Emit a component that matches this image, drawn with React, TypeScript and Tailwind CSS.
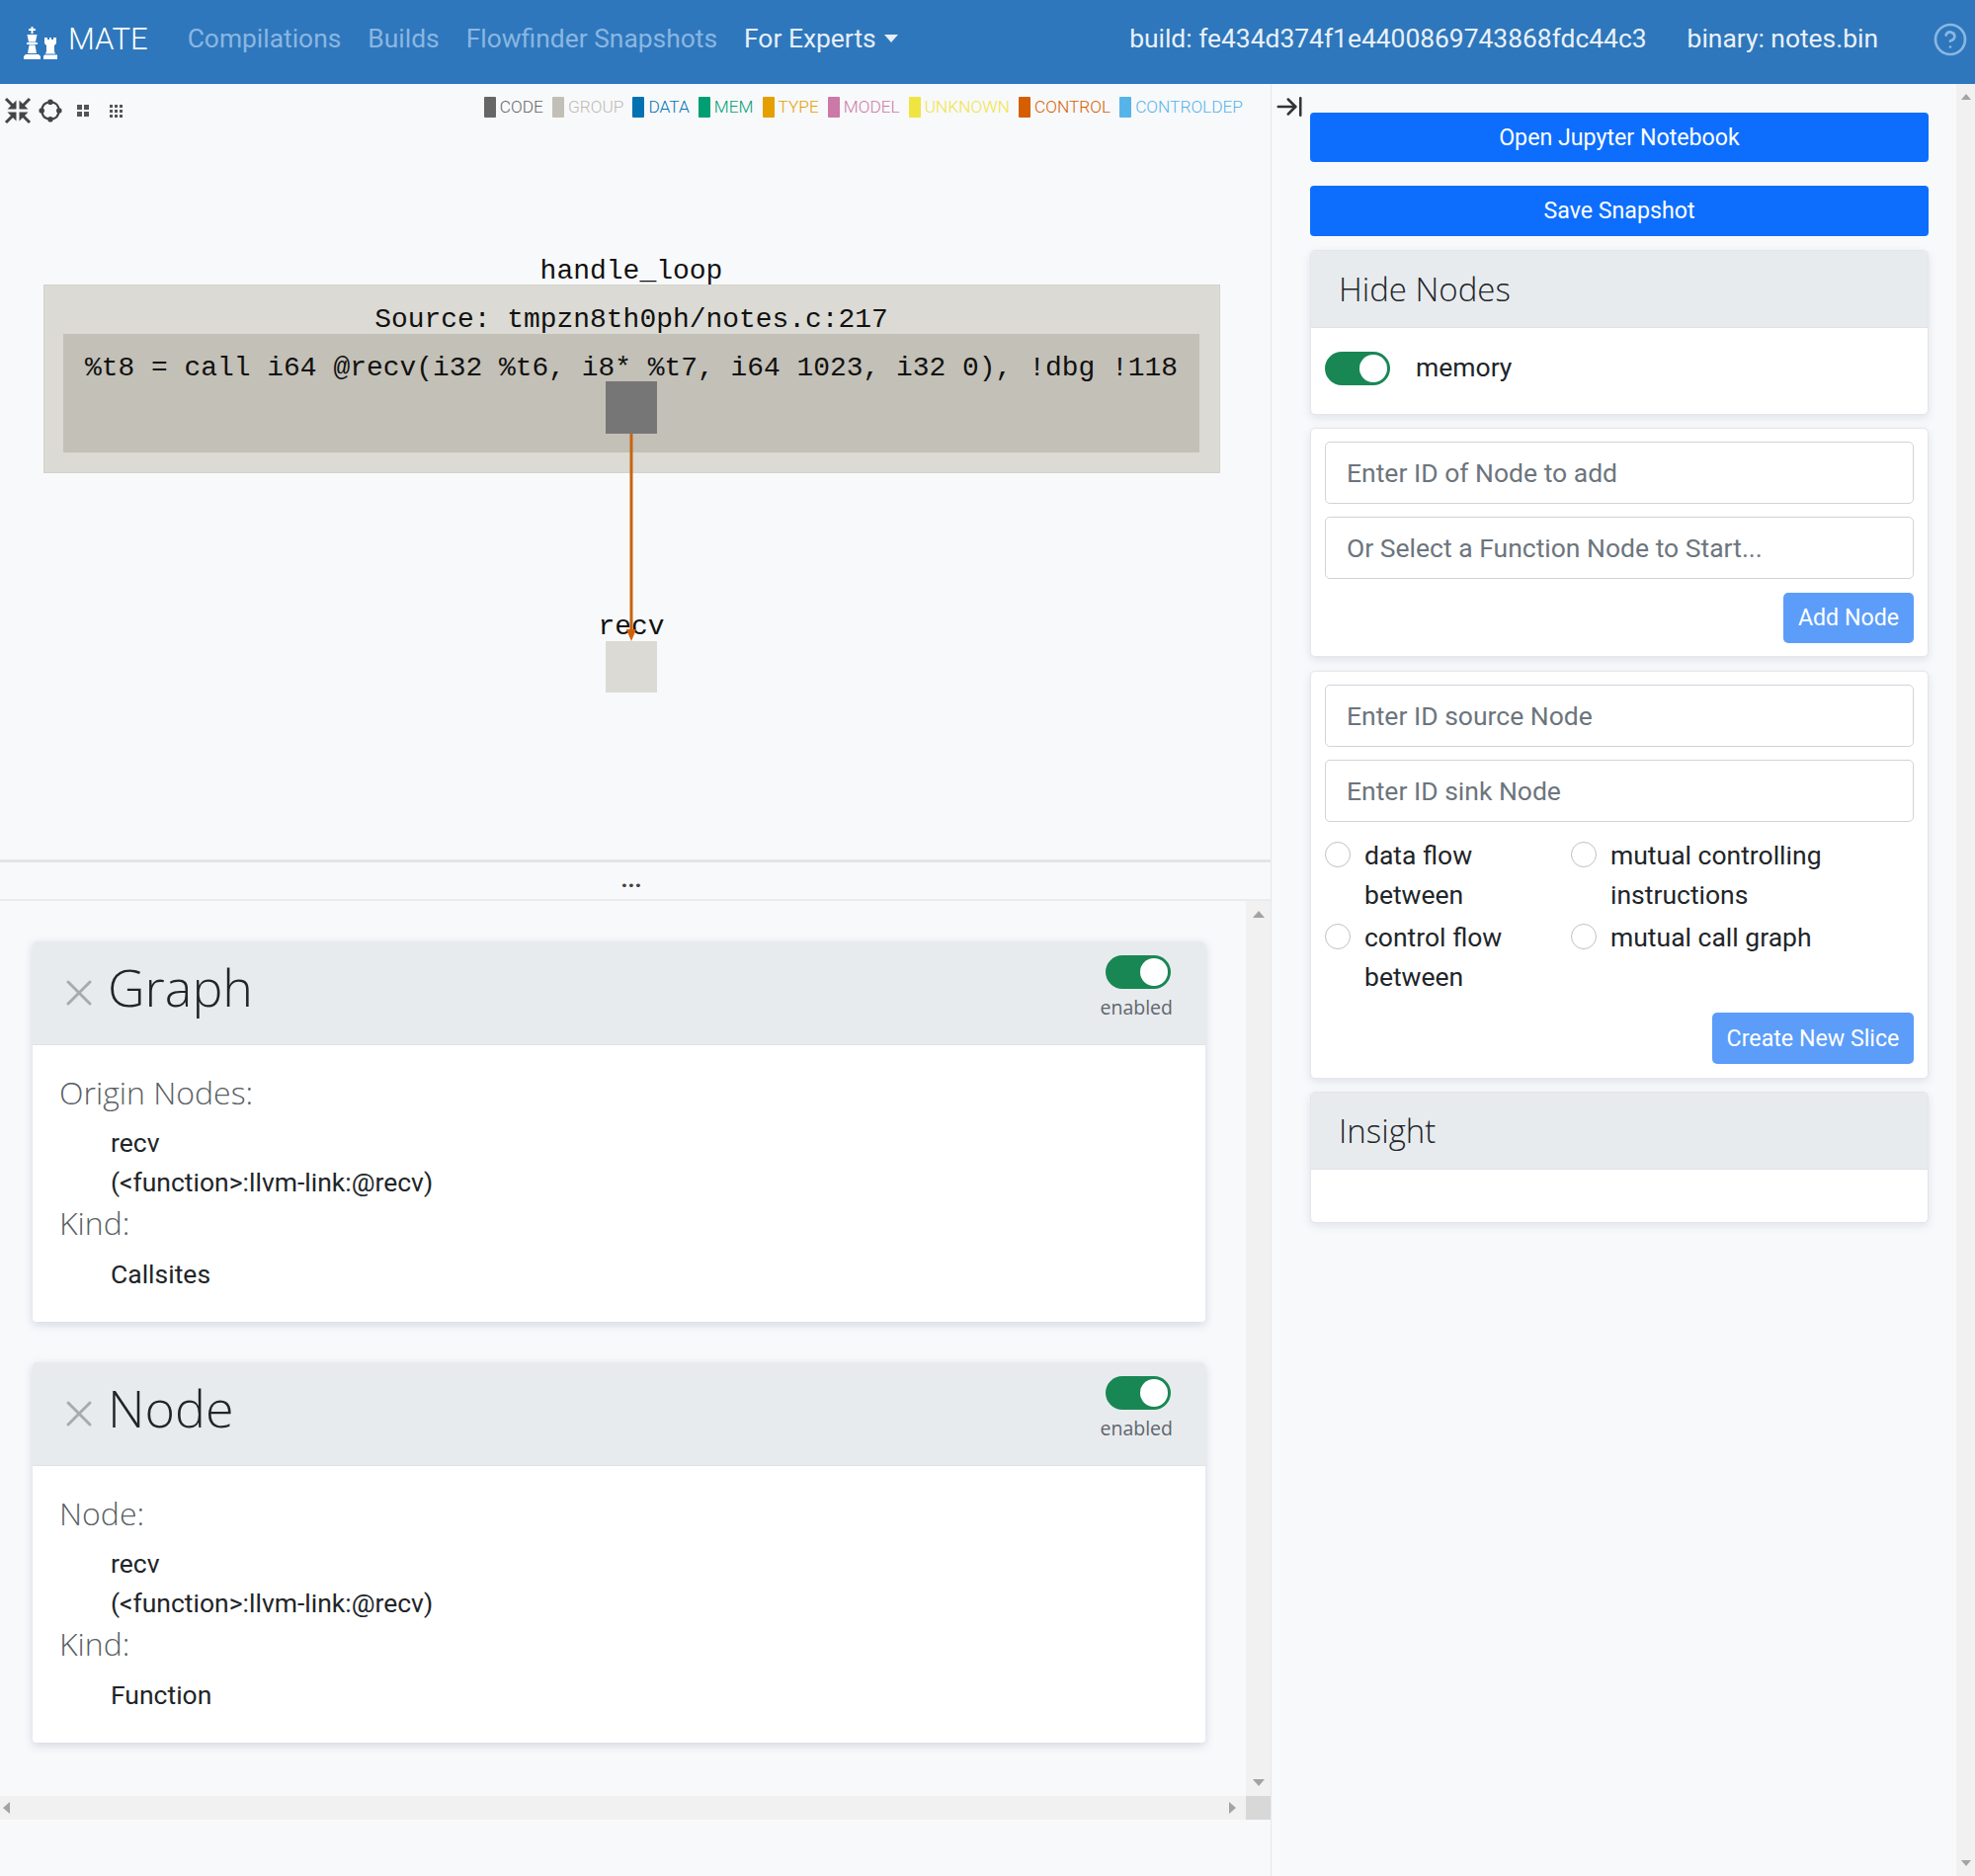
import React from "react";
import { ArrowRightToLine, CircleHelp, X } from "lucide-react";

const legend = [
  { label: "CODE", color: "bg-[#666666]", text: "text-[#666666]" },
  { label: "GROUP", color: "bg-[#c2c0b6]", text: "text-[#bdbbb2]" },
  { label: "DATA", color: "bg-[#0072b2]", text: "text-[#0072b2]" },
  { label: "MEM", color: "bg-[#009e73]", text: "text-[#009e73]" },
  { label: "TYPE", color: "bg-[#e69f00]", text: "text-[#e69f00]" },
  { label: "MODEL", color: "bg-[#cc79a7]", text: "text-[#cc79a7]" },
  { label: "UNKNOWN", color: "bg-[#f0e442]", text: "text-[#f0e442]" },
  { label: "CONTROL", color: "bg-[#d55e00]", text: "text-[#d55e00]" },
  { label: "CONTROLDEP", color: "bg-[#56b4e9]", text: "text-[#56b4e9]" },
];

function Toggle() {
  return (
    <span className="flex h-[34px] w-[66px] items-center justify-end rounded-full bg-[#198754] pr-[3px]">
      <span className="h-[28px] w-[28px] rounded-full bg-white" />
    </span>
  );
}

function ChessLogo() {
  return (
    <svg width="34" height="33" viewBox="0 0 34 33" fill="#fff">
      <path d="M7.5 0h2v2h2.5v2H9.5v3h-2V4H5V2h2.5z" />
      <path d="M3.5 8h10l-1.5 7.5H5z" />
      <rect x="3" y="16" width="11" height="2" />
      <path d="M5.5 18.500h6l1.500 8.500H4z" />
      <path d="M2 28h13l2 2v3H0v-3z" />
      <path d="M21 11h3v2h2v-2h2v2h2v-2h3v6l-2 2v6l1 2.500H22l1-2.500v-6l-2-2z" />
      <path d="M21 28.500h13V33H20v-3z" />
    </svg>
  );
}

function CompressIcon() {
  return (
    <svg width="28" height="28" viewBox="0 0 28 28" fill="#444" stroke="#444" strokeWidth="3">
      <path d="M2 2l8 8M2 26l8-8M26 2l-8 8M26 26l-8-8" />
      <path stroke="none" d="M12.500 12.500H3.500L12.500 3.500zM15.500 12.500H24.500L15.500 3.500zM12.500 15.500H3.500L12.500 24.500zM15.500 15.500H24.500L15.500 24.500z" />
    </svg>
  );
}

function LayoutIcon() {
  return (
    <svg width="24" height="24" viewBox="0 0 24 24" fill="#444" stroke="#444" strokeWidth="2.2">
      <path fill="none" d="M12 3.500Q20.500 3.500 20.500 12Q20.500 20.500 12 20.500Q3.500 20.500 3.500 12Q3.500 3.500 12 3.500Z" />
      <circle cx="12" cy="3.200" r="1.700" />
      <circle cx="20.800" cy="12" r="1.700" />
      <circle cx="12" cy="20.800" r="1.700" />
      <circle cx="3.200" cy="12" r="1.700" />
    </svg>
  );
}

function GridIcon({ count, size, gap }: { count: number; size: number; gap: number }) {
  const cells = Array.from({ length: count * count });
  return (
    <div className="grid" style={{ gridTemplateColumns: `repeat(${count}, ${size}px)`, gap }}>
      {cells.map((_, i) => (
        <span key={i} className="bg-[#555]" style={{ width: size, height: size }} />
      ))}
    </div>
  );
}

function GraphCanvas() {
  return (
    <svg className="block" width="1285" height="730" viewBox="0 140 1285 730">
      <g fontFamily="'Liberation Mono', monospace" fill="#111">
        <text x="639" y="282" fontSize="28" textAnchor="middle">handle_loop</text>
        <rect x="44.500" y="288.500" width="1190" height="190" fill="#dbdad4" stroke="#d2d1cc" />
        <text x="639" y="331" fontSize="27.930" textAnchor="middle">Source: tmpzn8th0ph/notes.c:217</text>
        <rect x="64" y="338" width="1150" height="120" fill="#c3c0b7" />
        <text x="639" y="380" fontSize="27.930" textAnchor="middle">%t8 = call i64 @recv(i32 %t6, i8* %t7, i64 1023, i32 0), !dbg !118</text>
        <rect x="613" y="386" width="52" height="53" fill="#767676" />
        <text x="639" y="642" fontSize="28" textAnchor="middle">recv</text>
        <rect x="613" y="649" width="52" height="52" fill="#dbdad4" />
      </g>
      <path d="M639 439V640" stroke="#c8640f" strokeWidth="3" />
      <path d="M634 637h10l-5 12z" fill="#d55e00" />
    </svg>
  );
}

function DetailCard({
  title,
  first,
  kind,
}: {
  title: string;
  first: string;
  kind: string;
}) {
  return (
    <div className="h-[385px] w-[1187px] overflow-hidden rounded-[4px] bg-white shadow-[0_3px_10px_rgba(120,140,160,0.3)]">
      <div className="flex h-[105px] items-start border-b border-[#dfe2e6] bg-[#e8ebee]">
        <X className="ml-[25px] mt-[30px] h-[44px] w-[44px] shrink-0 text-[#a8abae]" strokeWidth={1.6} />
        <span className="ml-[7px] mt-[8px] font-['Open_Sans'] text-[52px] leading-[76px] font-light text-[#212529]">{title}</span>
        <div className="ml-auto mr-[35px] mt-[14px] flex flex-col items-end">
          <Toggle />
          <span className="mr-[-2px] mt-[5px] font-['Open_Sans'] text-[19.500px] leading-[28px] text-[#5f666d]">enabled</span>
        </div>
      </div>
      <div className="pl-[27px] pt-[26px] font-['Roboto'] text-[26.500px] text-[#212529]">
        <div className="font-['Open_Sans'] text-[32px] leading-[44px] font-light text-[#5a5f65]">{first}</div>
        <div className="mt-[9px] pl-[52px] leading-[40px]">recv</div>
        <div className="pl-[52px] leading-[40px]">{"(<function>:llvm-link:@recv)"}</div>
        <div className="-mt-[1px] font-['Open_Sans'] text-[32px] leading-[44px] font-light text-[#5a5f65]">Kind:</div>
        <div className="mt-[10px] pl-[52px] leading-[40px]">{kind}</div>
      </div>
    </div>
  );
}

function TextField({ placeholder }: { placeholder: string }) {
  return (
    <input
      readOnly
      placeholder={placeholder}
      className="h-[63px] w-full rounded-[5px] border border-[#ced4da] bg-white px-[21px] font-['Roboto'] text-[26.500px] outline-none placeholder:text-[#6c757d]"
    />
  );
}

function Radio({ lines }: { lines: string[] }) {
  return (
    <div className="flex items-start gap-[14px]">
      <span className="mt-[6px] h-[26px] w-[26px] shrink-0 rounded-full border border-[#bdc2c6] bg-white" />
      <span className="font-['Roboto'] text-[26.500px] leading-[39.500px] text-[#212529]">
        {lines.map((line) => (
          <span key={line} className="block">{line}</span>
        ))}
      </span>
    </div>
  );
}

const cardClass = "overflow-hidden rounded-[5px] border border-[#e4e6e9] bg-white shadow-[0_3px_8px_rgba(120,140,160,0.2)]";
const lightButton = "rounded-[5px] bg-[#5c9dfa] font-['Roboto'] text-[23.200px] text-white";

function App() {
  return (
    <div className="flex h-[1899px] w-[1999px] flex-col overflow-hidden bg-[#f8f9fb] font-['Roboto']">
      <nav className="flex h-[85px] shrink-0 items-start bg-[#2e77bc] pt-[18px] text-[26.400px] leading-[42px]">
        <div className="ml-[24px] mt-[9px] flex">
          <ChessLogo />
        </div>
        <span className="ml-[11px] mt-[1px] text-[31px] font-light text-white">MATE</span>
        <a className="ml-[40px] text-[#8ab6e2]">Compilations</a>
        <a className="ml-[27px] text-[#8ab6e2]">Builds</a>
        <a className="ml-[27px] text-[#8ab6e2]">Flowfinder Snapshots</a>
        <a className="ml-[27px] flex items-center gap-[8px] text-[#e6eef7]">
          For Experts
          <span className="h-0 w-0 border-x-[7px] border-t-[8px] border-x-transparent border-t-[#e6eef7]" />
        </a>
        <span className="ml-auto text-[#eaf1f8]">build: fe434d374f1e4400869743868fdc44c3</span>
        <span className="ml-[41px] text-[#eaf1f8]">binary: notes.bin</span>
        <CircleHelp className="ml-[55px] mr-[7px] mt-[4px] h-[36px] w-[36px] text-[#8ab6e2]" strokeWidth={1.8} />
      </nav>

      <div className="flex min-h-0 flex-1">
        {/* left column: graph on top, details below */}
        <div className="flex w-[1287px] shrink-0 flex-col border-r border-[#e6e8ea]">
          <div className="flex h-[55px] shrink-0 items-start">
            <div className="ml-[4px] mt-[13px] flex items-center gap-[7px]">
              <CompressIcon />
              <LayoutIcon />
              <span className="ml-[8px]"><GridIcon count={2} size={5} gap={2} /></span>
              <span className="ml-[14px]"><GridIcon count={3} size={3} gap={2} /></span>
            </div>
            <div className="ml-auto mr-[28px] mt-[13px] flex gap-[9px]">
              {legend.map((item) => (
                <div key={item.label} className="flex items-center gap-[4px]">
                  <span className={`h-[21px] w-[12px] rounded-[1px] ${item.color}`} />
                  <span className={`text-[17.300px] leading-[21px] font-light ${item.text}`}>{item.label}</span>
                </div>
              ))}
            </div>
          </div>
          <GraphCanvas />
          <div className="h-[3px] shrink-0 bg-[#e2e4e6]" />
          <div className="flex h-[39px] shrink-0 items-center justify-center border-b-2 border-[#e9ebed] pb-[4px] pr-[8px] text-[24px] font-bold leading-none text-[#444]">
            ...
          </div>
          <div className="flex h-[930px] shrink-0 flex-col">
            <div className="flex min-h-0 flex-1">
              <div className="flex flex-1 flex-col gap-[41px] pl-[33px] pt-[41px]">
                <DetailCard title="Graph" first="Origin Nodes:" kind="Callsites" />
                <DetailCard title="Node" first="Node:" kind="Function" />
              </div>
              <div className="flex w-[25px] flex-col items-center justify-between bg-[#f1f1f1] py-[10px]">
                <span className="h-0 w-0 border-x-[6px] border-b-[7px] border-x-transparent border-b-[#a3a3a3]" />
                <span className="h-0 w-0 border-x-[6px] border-t-[7px] border-x-transparent border-t-[#a3a3a3]" />
              </div>
            </div>
            <div className="flex h-[24px] shrink-0 bg-[#f1f1f1]">
              <div className="flex flex-1 items-center justify-between px-[3px] pr-[10px]">
                <span className="h-0 w-0 border-y-[6px] border-r-[7px] border-y-transparent border-r-[#a3a3a3]" />
                <span className="h-0 w-0 border-y-[6px] border-l-[7px] border-y-transparent border-l-[#a3a3a3]" />
              </div>
              <div className="w-[25px] bg-[#d8d8d8]" />
            </div>
          </div>
        </div>

        {/* right column: sidebar with its own scrollbar */}
        <div className="relative flex-1 pl-[39px] pr-[47px] pt-[29px]">
          <ArrowRightToLine className="absolute left-[3px] top-[8px] h-[30px] w-[30px] text-[#333]" strokeWidth={2} />
          <div className="flex flex-col">
            <button className="h-[50px] rounded-[4px] bg-[#0d6efd] text-[23.200px] text-white">Open Jupyter Notebook</button>
            <button className="mt-[24px] h-[51px] rounded-[4px] bg-[#0d6efd] text-[23.200px] text-white">Save Snapshot</button>

            <div className={`mt-[14px] h-[167px] ${cardClass}`}>
              <div className="flex h-[78px] items-center border-b border-[#dfe2e6] bg-[#e8ebee] pl-[28px] font-['Open_Sans'] text-[33px] font-light text-[#212529]">
                Hide Nodes
              </div>
              <div className="flex items-center gap-[26px] pl-[14px] pt-[23px]">
                <Toggle />
                <span className="-mt-[3px] text-[26.500px] text-[#212529]">memory</span>
              </div>
            </div>

            <div className={`mt-[13px] flex flex-col gap-[13px] p-[13px] px-[14px] ${cardClass}`}>
              <TextField placeholder="Enter ID of Node to add" />
              <TextField placeholder="Or Select a Function Node to Start..." />
              <button className={`mt-[1px] self-end h-[51px] w-[132px] ${lightButton}`}>Add Node</button>
            </div>

            <div className={`mt-[14px] h-[413px] p-[13px] px-[14px] ${cardClass}`}>
              <div className="flex flex-col gap-[13px]">
                <TextField placeholder="Enter ID source Node" />
                <TextField placeholder="Enter ID sink Node" />
              </div>
              <div className="mt-[14px] grid grid-cols-[249px_1fr] gap-y-[4px]">
                <Radio lines={["data flow", "between"]} />
                <Radio lines={["mutual controlling", "instructions"]} />
                <Radio lines={["control flow", "between"]} />
                <Radio lines={["mutual call graph"]} />
              </div>
              <div className="mt-[17px] flex justify-end">
                <button className={`h-[52px] w-[204px] ${lightButton}`}>Create New Slice</button>
              </div>
            </div>

            <div className={`mt-[13px] h-[133px] ${cardClass}`}>
              <div className="flex h-[78px] items-center border-b border-[#dfe2e6] bg-[#e8ebee] pl-[28px] pt-[1px] font-['Open_Sans'] text-[33px] font-light text-[#212529]">
                Insight
              </div>
            </div>
          </div>
          <div className="absolute bottom-0 right-0 top-0 flex w-[19px] flex-col items-center justify-between bg-[#f1f1f1] py-[10px]">
            <span className="h-0 w-0 border-x-[5px] border-b-[6px] border-x-transparent border-b-[#a3a3a3]" />
            <span className="h-0 w-0 border-x-[5px] border-t-[6px] border-x-transparent border-t-[#a3a3a3]" />
          </div>
        </div>
      </div>
    </div>
  );
}

export default App;
